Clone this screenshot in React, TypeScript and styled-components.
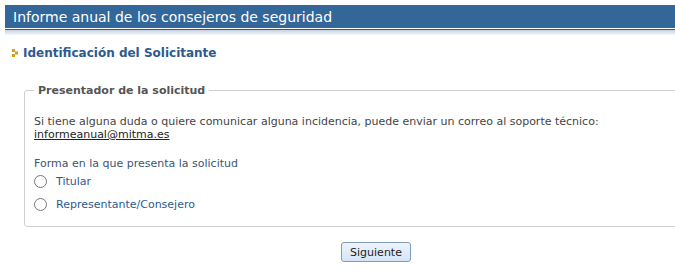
import React from "react";
import styled, { createGlobalStyle } from "styled-components";

const Global = createGlobalStyle`
  html, body { margin: 0; padding: 0; background: #fff; }
  body { font-family: "DejaVu Sans", Verdana, sans-serif; font-size: 11px; color: #444; }
`;

const Page = styled.div`
  padding: 5px 0 0 5px;
  overflow: hidden;
  width: 670px;
`;

const Header = styled.div`
  background: #336699;
  height: 23px;
  display: flex;
  align-items: center;
  padding-left: 8px;
  color: #fff;
  font-size: 14px;
  border-bottom: 1px solid #fff;
  box-shadow: 0 1px 0 #2d5a8a;
`;

const HeaderShade = styled.div`
  height: 5px;
  margin-top: 1px;
  background: linear-gradient(#c5d2e0, #f4f7fa);
`;

const SectionTitle = styled.h2`
  margin: 11px 0 0 7px;
  display: flex;
  align-items: center;
  gap: 4px;
  font-size: 12px;
  font-weight: bold;
  color: #2e5a8e;
`;

const Fieldset = styled.fieldset`
  margin: 24px -30px 0 19px;
  padding: 10px 10px 15px 9px;
  border: 1px solid #cfcfcf;
  border-radius: 3px;
`;

const Legend = styled.legend`
  padding: 0 4px;
  margin-left: 0;
  font-weight: bold;
  font-size: 11px;
  color: #555;
`;

const Text = styled.p`
  margin: 8px 0 0;
  line-height: 13px;
  color: #444;
`;

const Mail = styled.a`
  color: #222;
  text-decoration: underline;
`;

const Question = styled.div`
  margin-top: 16px;
  color: #3b5573;
`;

const RadioRow = styled.label<{ $first?: boolean }>`
  display: flex;
  align-items: center;
  gap: 9px;
  margin-top: ${(p) => (p.$first ? "5px" : "10px")};
  color: #2e5a8e;
`;

const Radio = styled.span`
  width: 11px;
  height: 11px;
  border: 1px solid #777;
  border-radius: 50%;
  background: #fff;
  display: inline-block;
`;

const Footer = styled.div`
  display: flex;
  justify-content: center;
  margin-top: 15px;
  padding-left: 72px;
`;

const Button = styled.button`
  font-family: "DejaVu Sans", Verdana, sans-serif;
  font-size: 11px;
  color: #222;
  height: 20px;
  padding: 0 8px;
  border: 1px solid #7f9db9;
  border-radius: 3px;
  background: linear-gradient(#eef4fc, #d4e4f7);
`;

const Bullet = () => (
  <svg width="7" height="8" viewBox="0 0 7 8">
    <rect x="0" y="0" width="3" height="3" fill="#d4a017" />
    <rect x="3" y="2.5" width="3" height="3" fill="#d4a017" />
    <rect x="0" y="5" width="3" height="3" fill="#d4a017" />
  </svg>
);

export default function App() {
  return (
    <>
      <Global />
      <Page>
        <Header>Informe anual de los consejeros de seguridad</Header>
        <HeaderShade />
        <SectionTitle>
          <Bullet />
          Identificación del Solicitante
        </SectionTitle>
        <Fieldset>
          <Legend>Presentador de la solicitud</Legend>
          <Text>
            Si tiene alguna duda o quiere comunicar alguna incidencia, puede enviar un correo al soporte técnico:
            <br />
            <Mail href="#">informeanual@mitma.es</Mail>
          </Text>
          <Question>Forma en la que presenta la solicitud</Question>
          <RadioRow $first>
            <Radio />
            Titular
          </RadioRow>
          <RadioRow>
            <Radio />
            Representante/Consejero
          </RadioRow>
        </Fieldset>
        <Footer>
          <Button>Siguiente</Button>
        </Footer>
      </Page>
    </>
  );
}
